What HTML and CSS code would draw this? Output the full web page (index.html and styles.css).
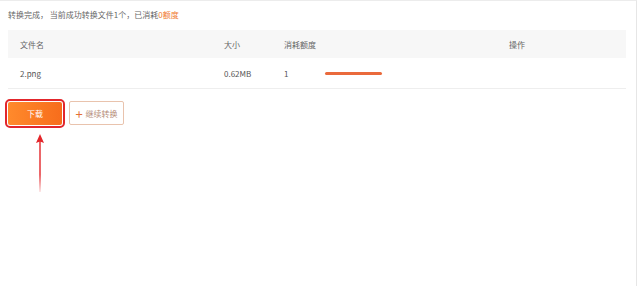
FILE: index.html
```html
<!DOCTYPE html>
<html lang="zh-CN">
<head>
    <meta charset="UTF-8">
    <meta name="viewport" content="width=device-width, initial-scale=1.0">
    <title>转换完成</title>
    <link rel="stylesheet" href="styles.css">
</head>
<body>
    <div class="panel">
        <div class="status">转换完成， 当前成功转换文件1个，已消耗<span class="hl">0额度</span></div>

        <div class="table">
            <div class="row head">
                <div class="cell">文件名</div>
                <div class="cell">大小</div>
                <div class="cell">消耗额度</div>
                <div class="cell op">操作</div>
            </div>
            <div class="row">
                <div class="cell">2.png</div>
                <div class="cell">0.62MB</div>
                <div class="cell used"><span>1</span><i class="bar"></i></div>
                <div class="cell op"></div>
            </div>
        </div>

        <div class="actions">
            <button class="btn btn-download">下载</button>
            <button class="btn btn-again"><span class="plus">+</span>继续转换</button>
        </div>

        <!-- 红色提示箭头 -->
        <svg class="arrow" width="12" height="58" viewBox="0 0 12 58">
            <defs>
                <linearGradient id="fade" x1="0" y1="0" x2="0" y2="1">
                    <stop offset="0" stop-color="#e3262a"/>
                    <stop offset="0.7" stop-color="#e3262a"/>
                    <stop offset="1" stop-color="#e3262a" stop-opacity="0.15"/>
                </linearGradient>
            </defs>
            <path d="M6 0 L10 9 L6.7 7.8 L6.7 58 L5.3 58 L5.3 7.8 L2 9 Z" fill="url(#fade)"/>
        </svg>
    </div>
</body>
</html>
```

FILE: styles.css
```css
body {
    margin: 0;
    padding: 0;
    background: #fff;
    font-family: "Noto Sans CJK SC", "Noto Sans", sans-serif;
    font-size: 8px;
    color: #555;
}
.panel {
    width: 636px;
    height: 285px;
    border-top: 1px solid #ececec;
    border-right: 1px solid #e6e6e6;
}
.status {
    padding: 7px 0 0 8px;
    height: 22px;
    line-height: 14px;
    color: #666;
}
.hl {
    color: #f07a32;
}
.table {
    margin-left: 8px;
    width: 618px;
}
.row {
    display: grid;
    grid-template-columns: 204px 60px 136px 1fr;
    height: 30px;
    align-items: center;
    border-bottom: 1px solid #eeeeee;
}
.row.head {
    height: 28px;
    background: #f7f7f7;
    border-bottom: none;
}
.cell {
    padding-left: 12px;
    color: #555;
}
.row.head .cell {
    color: #666;
}
.cell.op {
    padding-left: 0;
    text-align: center;
}
.used {
    display: flex;
    align-items: center;
}
.bar {
    display: inline-block;
    width: 57px;
    height: 3px;
    margin-left: 37px;
    border-radius: 2px;
    background: #ea6a3c;
}
.actions {
    display: flex;
    gap: 7px;
    padding: 12px 0 0 8px;
    align-items: center;
}
.btn {
    height: 24px;
    border-radius: 2px;
    font-family: inherit;
    font-size: 8px;
    padding: 0;
    cursor: pointer;
}
.btn-download {
    width: 54px;
    height: 23px;
    border: none;
    color: #fff;
    background: linear-gradient(90deg, #ff8a2c, #f76d1c);
    outline: 2px solid #e2262c;
    outline-offset: 1px;
}
.btn-again {
    width: 55px;
    border: 1px solid #e9c3ad;
    background: #fff;
    color: #b58c78;
    display: flex;
    align-items: center;
    justify-content: center;
    gap: 3px;
}
.plus {
    font-size: 13px;
    line-height: 1;
    color: #e46f35;
}
.arrow {
    display: block;
    margin: 9px 0 0 34px;
}
```
